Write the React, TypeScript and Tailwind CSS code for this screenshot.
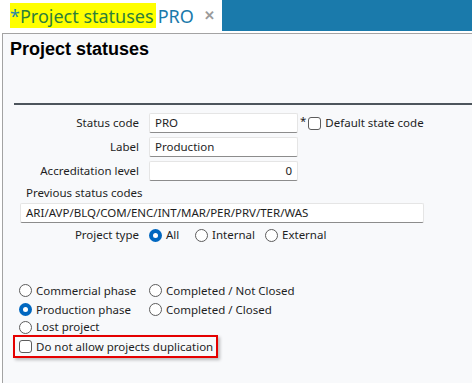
const ui = { fontFamily: '"Noto Sans", "Open Sans", sans-serif' };

function Radio({ checked, label, className = '' }: { checked?: boolean; label: string; className?: string }) {
  return (
    <div className={`flex items-center gap-[4px] whitespace-nowrap ${className}`}>
      {checked ? (
        <span className="flex h-[13px] w-[13px] shrink-0 items-center justify-center rounded-full bg-[#0067c0]">
          <span className="h-[5px] w-[5px] rounded-full bg-white" />
        </span>
      ) : (
        <span className="h-[13px] w-[13px] shrink-0 rounded-full border border-[#5c5c5c] bg-white" />
      )}
      <span>{label}</span>
    </div>
  );
}

function Check({ label }: { label: string }) {
  return (
    <div className="flex items-center gap-[4px] whitespace-nowrap">
      <span className="h-[13px] w-[13px] shrink-0 rounded-[3px] border border-[#5c5c5c] bg-white" />
      <span>{label}</span>
    </div>
  );
}

function Field({ value, right, className = '' }: { value: string; right?: boolean; className?: string }) {
  return (
    <div
      className={`flex h-[20px] items-center whitespace-nowrap rounded-[2px] border border-[#e5e5e5] border-b-[#8c8c8c] bg-white px-[5px] ${
        right ? 'justify-end' : ''
      } ${className}`}
    >
      {value}
    </div>
  );
}

export default function App() {
  const rows = [
    { label: 'Status code', value: 'PRO' },
    { label: 'Label', value: 'Production' },
    { label: 'Accreditation level', value: '0', right: true },
  ];

  return (
    <div className="flex h-[383px] w-[472px] flex-col overflow-hidden bg-white text-[11.5px] text-[#1e1e1e]" style={ui}>
      {/* tab bar */}
      <div className="flex h-[31px] shrink-0">
        <div className="flex w-[222px] items-center whitespace-nowrap pl-[10px]">
          <span className="flex h-[25px] items-center bg-[#ffff00] pr-[2px] text-[18px] leading-none text-[#2e7f3a]">
            <span className="text-[#2a86a6]">*</span>Project statuses
          </span>
          <span className="ml-[2px] text-[18px] leading-none text-[#1a7aab]">PRO</span>
          <span className="ml-[10px] text-[13px] font-bold leading-none text-[#9a9a9a]">✕</span>
        </div>
        <div className="flex-1 bg-[#1a7aab]" />
      </div>
      <div className="h-[2px] shrink-0 bg-white" />

      {/* panel */}
      <div className="ml-[2px] flex-1 border-l border-t border-[#a3a3a3] bg-[#f8f9fb]">
        <h1
          className="pl-[7px] pt-[4px] text-[18px] font-bold leading-[22px] text-black"
          style={{ fontFamily: '"Liberation Sans", Arial, sans-serif' }}
        >
          Project statuses
        </h1>
        <div className="ml-[11px] mt-[43px] h-[2px] bg-[#4d555c]" />

        <div className="mt-[8px] flex flex-col gap-[4px]">
          {rows.map((r, i) => (
            <div key={r.label} className="flex h-[20px] items-center">
              <div className="w-[136px] whitespace-nowrap text-right">{r.label}</div>
              <Field value={r.value} right={r.right} className="ml-[10px] w-[149px]" />
              {i === 0 && (
                <div className="ml-[2px] flex items-center gap-[2px]">
                  <span className="-mt-[4px]">*</span>
                  <Check label="Default state code" />
                </div>
              )}
            </div>
          ))}
        </div>

        <div className="mt-[4px] flex h-[16px] items-center whitespace-nowrap pl-[23px]">Previous status codes</div>
        <Field value="ARI/AVP/BLQ/COM/ENC/INT/MAR/PER/PRV/TER/WAS" className="ml-[17px] mt-[2px] w-[404px]" />

        <div className="mt-[2px] flex h-[20px] items-center">
          <div className="w-[136px] whitespace-nowrap text-right">Project type</div>
          <div className="ml-[10px] flex items-center">
            <Radio checked label="All" className="w-[46px]" />
            <Radio label="Internal" className="w-[70px]" />
            <Radio label="External" />
          </div>
        </div>

        <div className="mt-[36px] flex">
          <div className="flex w-[146px] flex-col pl-[16px]">
            <Radio label="Commercial phase" className="h-[19px]" />
            <Radio checked label="Production phase" className="h-[19px]" />
            <Radio label="Lost project" className="h-[16px]" />
          </div>
          <div className="flex flex-col">
            <Radio label="Completed / Not Closed" className="h-[19px]" />
            <Radio label="Completed / Closed" className="h-[19px]" />
          </div>
        </div>

        <div className="ml-[10px] flex h-[23px] w-[205px] items-center border-2 border-[#e50000] pl-[4px] shadow-[2px_2px_3px_rgba(0,0,0,0.25)]">
          <Check label="Do not allow projects duplication" />
        </div>
      </div>
    </div>
  );
}
